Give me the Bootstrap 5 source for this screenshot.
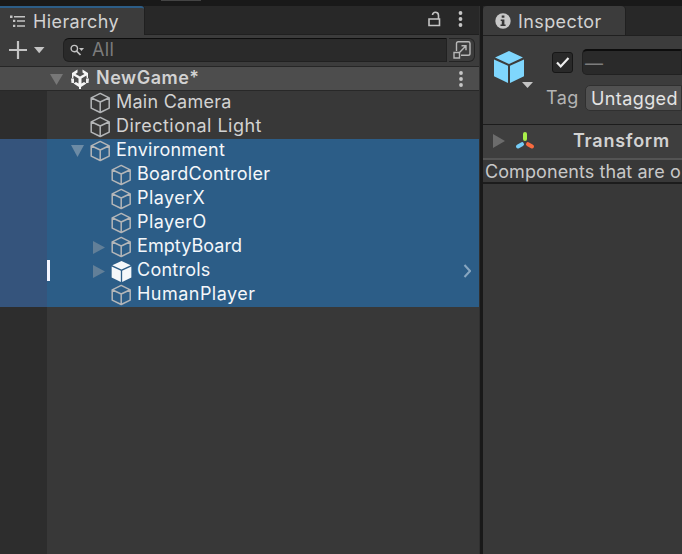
<!DOCTYPE html>
<html lang="en">
<head>
<meta charset="utf-8">
<title>Hierarchy</title>
<link href="https://cdn.jsdelivr.net/npm/bootstrap@5.3.0/dist/css/bootstrap.min.css" rel="stylesheet">
<style>
body{background:#191919;color:#d2d2d2;font:400 18px/24px Inter,"Liberation Sans",sans-serif;width:682px;height:554px;letter-spacing:.4px;overflow:hidden}
svg{display:block;flex:none}
.panes{height:548px}
.top-strip{height:6px;padding-left:161px}
.top-strip span{display:block;width:40px;height:1px;background:#444}
.hier{width:480px;background:#383838;border-right:1px solid #303030}
.insp{width:199px;margin-left:3px;background:#383838}
.tabs{height:29px;background:#282828;box-shadow:inset 0 -1px #202020}
.insp .tabs{box-shadow:none}
.tab-on{background:#3c3c3c;height:29px;color:#d2d2d2;box-shadow:1px 0 #202020}
.hier .tab-on{width:144px;border-top:2px solid #2c5d87;padding-left:10px;border-radius:0 3px 0 0}
.tab-gap{margin-right:7px}
.insp .tab-on{width:142px;padding-left:12px;border-radius:4px 4px 0 0}
.hier .tabs{padding-right:16px}
.t-insp{padding-top:2px}
.lock{margin-right:1px}
.tools{height:31px;background:#3c3c3c;padding:3px 4px 4px 8px}
.search{margin-left:17px;width:386px;height:24px;background:#2a2a2a;border:1px solid #212121;border-top-color:#0d0d0d;border-radius:6px 0 0 6px;color:#7c7c7c;padding-left:6px}
.jump{width:26px;height:24px;border:1px solid #242424;border-left:0;border-radius:0 6px 6px 0;margin-left:2px}
.scene{height:25px;background:#4d4d4d;border-top:1px solid #262626;border-bottom:1px solid #282828;padding:0 16px 0 50px;font-weight:600}
.t-game{margin-left:7px;padding-bottom:1px;letter-spacing:.5px}
.gutter{width:47px;background:#2d2d2d}
.gutter-sel{height:168px;margin-top:48px;background:#35547c;padding-bottom:26px}
.gutter-sel i{display:block;flex:none;width:3px;height:21px;background:#f2f4ff;margin-left:47px;position:relative}
.item{height:24px;line-height:22px}
.item .cube{margin-right:5px}
.item .label{padding-bottom:2px;letter-spacing:.25px}
.item .loose{letter-spacing:.47px}
.item .tight{letter-spacing:.08px}
.lv1{padding-left:24px}.lv2{padding-left:45px}
.item .fold{width:14px;margin-right:5px}
.sel{background:#2c5d87;color:#f4f7fa}
.head{height:90px;background:#3c3c3c;border-top:1px solid #202020;border-bottom:1px solid #1c1c1c;padding:13px 0 0 11px}
.check{width:21px;height:21px;background:#292929;border:1px solid #171717;border-radius:3px;margin:3px 0 0 16px}
.namebox{width:100px;height:26px;margin-left:9px;background:#2a2a2a;border:1px solid #212121;border-top:2px solid #0d0d0d;border-radius:5px 0 0 5px;color:#7c7c7c;line-height:26px;padding-left:2px}
.tagrow{margin-top:10px}
.t-tag{width:39px;padding:1px 0 0 10px;color:#b4b4b4;flex:none}
.tagbox{width:97px;height:26px;margin-left:10px;background:#515151;border:1px solid #303030;border-radius:5px 0 0 5px;color:#e4e4e4;padding-left:5px;line-height:25px}
.comp{height:33px;background:#3e3e3e;font-weight:600;padding-left:10px}
.comp svg{margin-bottom:2px}
.axis{margin-left:10px}
.t-trans{margin-left:38px;padding-bottom:1px;letter-spacing:.75px}
.note{height:26px;border-top:2px solid #545454;border-bottom:2px solid #1c1c1c;line-height:23px;padding-left:2px;color:#c8c8c8;letter-spacing:.08px}
</style>
<script src="https://cdn.jsdelivr.net/npm/bootstrap@5.3.0/dist/js/bootstrap.bundle.min.js"></script>
</head>
<body>
<svg width="0" height="0" class="position-absolute">
<symbol id="box" viewBox="0 0 21 22"><path d="M10.200 1.400 19.200 5.800v10.300l-9 4.400-9-4.400V5.800zM1.200 5.800l9 4.200 9-4.200M10.200 10v10.500" fill="none" stroke="#b4b6b8" stroke-width="1.500" stroke-linejoin="round"/></symbol>
<symbol id="solid" viewBox="0 0 30 32"><path d="M15 0 29 6.400 15 13 1 6.400zM0 8.500l14 6.300V32L0 25.300zM30 8.500l-14 6.300V32l14-6.700z" fill="currentColor"/></symbol>
<symbol id="dots" viewBox="0 0 4 16"><g fill="#c6c6c6"><circle cx="2" cy="2" r="1.900"/><circle cx="2" cy="8" r="1.900"/><circle cx="2" cy="14" r="1.900"/></g></symbol>
</svg>
<div class="top-strip"><span></span></div>
<div class="panes d-flex">
<section class="hier d-flex flex-column">
  <div class="tabs d-flex align-items-center">
    <div class="tab-on d-flex align-items-center me-auto">
      <svg class="tab-gap" width="16" height="13" viewBox="0 0 16 13"><path d="M0 .5h2.500V3H0zM3 4.800h2.300V7H3zM3 9.800h2.300v2.300H3z" fill="#c4c4c4"/><path d="M4 1.700h11M7 6h8M7 11h8" stroke="#c4c4c4" stroke-width="1.400"/></svg><span>Hierarchy</span>
    </div>
    <svg class="lock mb-1" width="13" height="16" viewBox="0 0 13 16"><path d="M1 8h10.500v6.500H1zM10.500 8V4.500C10.500 2 9 1.200 7.500 1.200S4.700 2 4.500 4" fill="none" stroke="#c4c4c4" stroke-width="1.600"/></svg>
    <svg class="ms-3 mb-1" width="5" height="16"><use href="#dots"/></svg>
  </div>
  <div class="tools d-flex">
    <svg width="38" height="24" viewBox="0 0 38 24"><path d="M10 3v18M1 12h18" stroke="#c4c4c4" stroke-width="2.200"/><path d="M26 9h10.500l-5.300 6.200z" fill="#c4c4c4"/></svg>
    <div class="search d-flex align-items-center"><svg width="14" height="13" viewBox="0 0 14 13"><circle cx="4.300" cy="4.600" r="3.200" fill="none" stroke="#c4c4c4" stroke-width="1.400"/><path d="m6.500 7 4 4" stroke="#c4c4c4" stroke-width="1.700"/><path d="M9 4h5l-2.500 3z" fill="#c4c4c4"/></svg><span class="ms-2">All</span></div>
    <div class="jump d-flex align-items-center ps-1"><svg width="18" height="18" viewBox="0 0 18 18"><path d="M3.500 10V2.500q0-1.700 1.700-1.700h10q1.800 0 1.800 1.700v10q0 1.800-1.800 1.800H8M1 11.500h5.500V17H1zM6.500 11.500l6.500-6.700M8.500 4.700H13v4.500" fill="none" stroke="#b8b8b8" stroke-width="1.400"/></svg></div>
  </div>
  <div class="scene d-flex align-items-center">
    <svg width="13" height="12"><path d="M0 1h13L6.500 12z" fill="#777"/></svg>
    <svg class="ms-2" width="18" height="20" viewBox="0 0 18 20"><path d="M6.500.5v3L4.500 5 9 7.500 13.500 5l-2-1.500v-3L17 4v5.500l-1.500-1V6.500L10.500 9.500v5l2.500-1.500 2.500 1.500L10 18v2H8v-2l-5.500-3.500L5 13l2.500 1.500v-5l-5-3v2L1 9.500V4z" fill="#f5f5f5"/><path d="M0 9.500h3v4.500H.5zM18 9.500h-3v4.500h2.500z" fill="#eee"/></svg>
    <span class="t-game me-auto">NewGame*</span>
    <svg width="4" height="16"><use href="#dots"/></svg>
  </div>
  <div class="d-flex flex-grow-1">
    <div class="gutter"><div class="gutter-sel d-flex align-items-end"><i></i></div></div>
    <div class="flex-grow-1">
      <div class="item lv1 d-flex align-items-center"><span class="fold"></span><svg class="cube" width="21" height="22"><use href="#box"/></svg><span class="label">Main Camera</span></div>
      <div class="item lv1 d-flex align-items-center"><span class="fold"></span><svg class="cube" width="21" height="22"><use href="#box"/></svg><span class="label loose">Directional Light</span></div>
      <div class="item lv1 sel d-flex align-items-center"><svg class="fold" height="12"><path d="M0 0h13L6.500 12z" fill="#6c8ba5"/></svg><svg class="cube" width="21" height="22"><use href="#box"/></svg><span class="label">Environment</span></div>
      <div class="item lv2 sel d-flex align-items-center"><span class="fold"></span><svg class="cube" width="21" height="22"><use href="#box"/></svg><span class="label">BoardControler</span></div>
      <div class="item lv2 sel d-flex align-items-center"><span class="fold"></span><svg class="cube" width="21" height="22"><use href="#box"/></svg><span class="label loose">PlayerX</span></div>
      <div class="item lv2 sel d-flex align-items-center"><span class="fold"></span><svg class="cube" width="21" height="22"><use href="#box"/></svg><span class="label loose">PlayerO</span></div>
      <div class="item lv2 sel d-flex align-items-center"><svg class="fold" height="13"><path d="M1 0v13l12-6.500z" fill="#627f98"/></svg><svg class="cube" width="21" height="22"><use href="#box"/></svg><span class="label tight">EmptyBoard</span></div>
      <div class="item lv2 sel d-flex align-items-center pe-2"><svg class="fold" height="13"><path d="M1 0v13l12-6.500z" fill="#627f98"/></svg><svg class="cube" width="21" height="21"><use href="#solid"/></svg><span class="label me-auto">Controls</span><svg width="8" height="14" viewBox="0 0 8 14"><path d="m1.500 1 5.500 6-5.500 6" fill="none" stroke="#88a6c0" stroke-width="2"/></svg></div>
      <div class="item lv2 sel d-flex align-items-center"><span class="fold"></span><svg class="cube" width="21" height="22"><use href="#box"/></svg><span class="label loose">HumanPlayer</span></div>
    </div>
  </div>
</section>
<section class="insp">
  <div class="tabs"><div class="tab-on d-flex align-items-center">
    <svg class="tab-gap" width="16" height="16" viewBox="0 0 16 16"><circle cx="8" cy="8" r="7.700" fill="#c8c8c8"/><path d="M6.700 2.600h2.700v2.200H6.700zM5.700 6.400h3.700v5h1.200v1.700H5.500v-1.700h1.300V8H5.700z" fill="#383838"/></svg><span class="t-insp">Inspector</span></div></div>
  <div class="head d-flex">
    <svg width="42" height="42" viewBox="0 0 42 42"><g color="#7fd6fd"><use href="#solid" x="0" y="2" width="30" height="32"/></g><path d="M28 33h11l-5.500 6z" fill="#c4c4c4"/></svg>
    <div class="flex-grow-1">
      <div class="d-flex"><div class="check"><svg width="19" height="19" viewBox="0 0 19 19"><path d="m4 9.500 3.700 4L15.500 5" fill="none" stroke="#eee" stroke-width="2.200"/></svg></div><div class="namebox">—</div></div>
      <div class="d-flex tagrow"><span class="t-tag">Tag</span><div class="tagbox">Untagged</div></div>
    </div>
  </div>
  <div class="comp d-flex align-items-center"><svg width="12" height="14"><path d="M0 0v14l12-7z" fill="#6c6c6c"/></svg>
    <svg class="axis" width="20" height="18" viewBox="0 0 20 18"><g stroke-width="4" stroke-linecap="round"><path d="M10 2v5" stroke="#a8ef4a"/><path d="m3 14.500 4-2.300" stroke="#75cdf8"/><path d="m13 12.200 4 2.300" stroke="#fa6b3f"/></g></svg><span class="t-trans">Transform</span></div>
  <div class="note text-nowrap overflow-hidden">Components that are o</div>
</section>
</div>
</body>
</html>
